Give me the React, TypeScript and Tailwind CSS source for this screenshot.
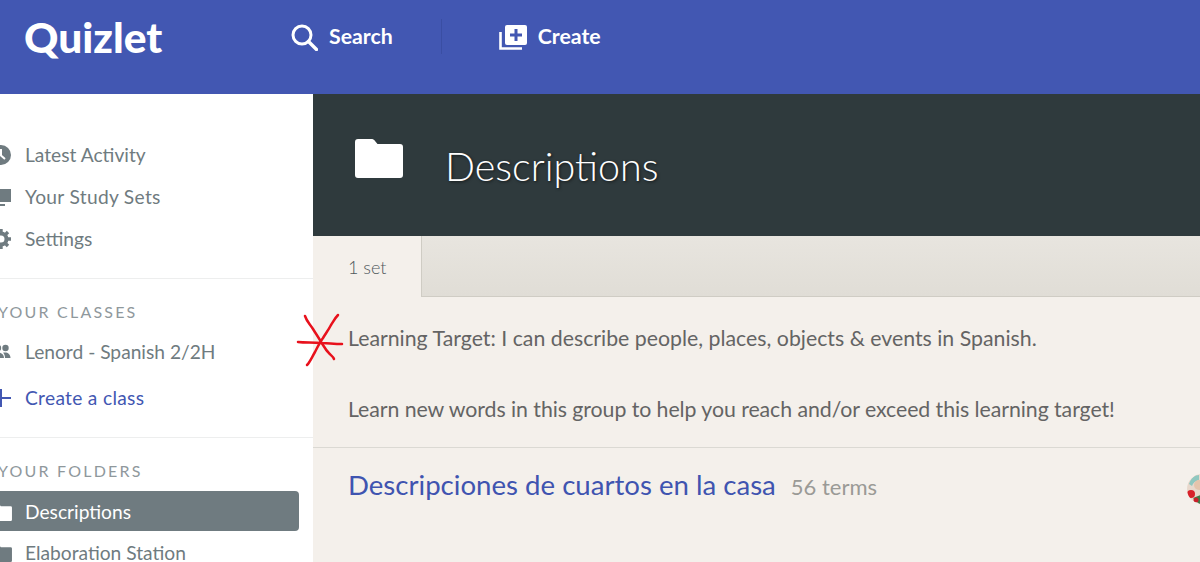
import React from "react";

const font = { fontFamily: '"Lato", "Liberation Sans", sans-serif' };

function ClockIcon() {
  return (
    <svg viewBox="0 0 20 20" className="w-[20px] h-[20px]">
      <circle cx="10" cy="10" r="10" fill="#6f7b80" />
      <path d="M10 4v6.500l4 3.500" stroke="#fff" strokeWidth="2" fill="none" />
    </svg>
  );
}
function SetsIcon() {
  return (
    <svg viewBox="0 0 20 20" className="w-[20px] h-[20px]">
      <path d="M3 2h17v13H3z" fill="#6f7b80" />
      <path d="M0 17h14v2H0z" fill="#6f7b80" />
    </svg>
  );
}
function GearIcon() {
  return (
    <svg viewBox="0 0 20 20" className="w-[20px] h-[20px]">
      <circle cx="10" cy="10" r="5.500" fill="none" stroke="#6f7b80" strokeWidth="4" />
      <path d="M10 0v20M0 10h20M3 3l14 14M17 3L3 17" stroke="#6f7b80" strokeWidth="3.400" strokeDasharray="3.400 13.200 3.400" />
    </svg>
  );
}
function PeopleIcon() {
  return (
    <svg viewBox="0 0 20 20" className="w-[20px] h-[20px]">
      <circle cx="7" cy="6" r="3.200" fill="#6f7b80" />
      <circle cx="14.500" cy="6" r="3.200" fill="#6f7b80" />
      <path d="M1 16c0-4 3-5.500 6-5.500s6 1.500 6 5.500zM14 16c0-2-.5-4-2-5.300 4-1 7.500 1 7.500 5.300z" fill="#6f7b80" />
    </svg>
  );
}
function PlusIcon() {
  return (
    <svg viewBox="0 0 20 20" className="w-[20px] h-[20px]">
      <path d="M10 1v18M0 10h20" stroke="#4257b2" strokeWidth="2" />
    </svg>
  );
}
function FolderIcon({ fill, className }: { fill: string; className: string }) {
  return (
    <svg viewBox="0 0 48 39" className={className}>
      <path d="M3 0h13c2 0 3 .5 4 2l2.500 3H45a3 3 0 0 1 3 3v28a3 3 0 0 1-3 3H3a3 3 0 0 1-3-3V3a3 3 0 0 1 3-3z" fill={fill} />
    </svg>
  );
}

function NavRow({ icon, label, color = "text-[#6f7b80]", h = "h-[42px]" }: { icon: React.ReactNode; label: string; color?: string; h?: string }) {
  return (
    <div className={`flex items-center ${h}`}>
      <div className="w-[34px] -ml-[9px] shrink-0 flex">{icon}</div>
      <span className={`text-[19.2px] whitespace-nowrap ${color}`}>{label}</span>
    </div>
  );
}

export default function App() {
  return (
    <div className="w-[1200px] h-[562px] overflow-hidden flex flex-col bg-white" style={font}>
      <header className="h-[94px] shrink-0 bg-[#4257b2] flex items-start text-white">
        <div className="ml-[24px] mt-[12px] w-[267px] text-[42.5px] leading-[50px] font-black">Quizlet</div>
        <div className="mt-[23px] flex items-center h-[28px]">
          <svg viewBox="0 0 27 27" className="w-[27px] h-[27px]">
            <circle cx="11" cy="11" r="9" fill="none" stroke="#fff" strokeWidth="3" />
            <path d="M17.500 17.500L25.500 25.500" stroke="#fff" strokeWidth="3.400" strokeLinecap="round" />
          </svg>
          <span className="ml-[11px] text-[21.3px] font-bold">Search</span>
        </div>
        <div className="ml-[48px] mt-[19px] w-px h-[35px] bg-[#3a4ea3]" />
        <div className="ml-[57px] mt-[23px] flex items-center h-[28px]">
          <svg viewBox="0 0 28 28" className="w-[28px] h-[28px]">
            <path d="M8 2h18a2 2 0 0 1 2 2v16a2 2 0 0 1-2 2H8a2 2 0 0 1-2-2V4a2 2 0 0 1 2-2z" fill="#fff" />
            <path d="M17 6v12M11 12h12" stroke="#4257b2" strokeWidth="3" />
            <path d="M1.500 9v16.500H23" stroke="#fff" strokeWidth="2.600" fill="none" />
          </svg>
          <span className="ml-[11px] text-[21.3px] font-bold">Create</span>
        </div>
      </header>
      <div className="flex flex-1 min-h-0">
        <aside className="w-[313px] shrink-0 overflow-hidden pt-[40px] bg-white">
          <NavRow icon={<ClockIcon />} label="Latest Activity" />
          <NavRow icon={<SetsIcon />} label="Your Study Sets" color="text-[#6f7b80] tracking-[0.3px]" />
          <NavRow icon={<GearIcon />} label="Settings" />
          <div className="h-px bg-[#edeeee] mt-[18px]" />
          <div className="mt-[23px] -ml-[2px] text-[16px] leading-[20px] tracking-[2.2px] text-[#8f989c] whitespace-nowrap">YOUR CLASSES</div>
          <div className="mt-[9px]"><NavRow icon={<PeopleIcon />} label="Lenord - Spanish 2/2H" /></div>
          <div className="mt-[3px]"><NavRow icon={<PlusIcon />} label="Create a class" color="text-[#4257b2] tracking-[0.3px]" h="h-[44px]" /></div>
          <div className="h-px bg-[#edeeee] mt-[17px]" />
          <div className="mt-[23px] -ml-[2px] text-[16px] leading-[20px] tracking-[2.2px] text-[#8f989c] whitespace-nowrap">YOUR FOLDERS</div>
          <div className="mt-[10px] w-[299px] h-[40px] bg-[#6f7b80] rounded-r-[4px]">
            <NavRow icon={<FolderIcon fill="#fff" className="w-[21px] h-[17px]" />} label="Descriptions" color="text-white" h="h-[42px]" />
          </div>
          <div className="mt-[1px]"><NavRow icon={<FolderIcon fill="#6f7b80" className="w-[21px] h-[17px]" />} label="Elaboration Station" /></div>
        </aside>
        <main className="flex-1 min-w-0 bg-[#f4f0eb] flex flex-col relative">
          <div className="h-[142px] shrink-0 bg-[#2f3a3d] flex items-start">
            <FolderIcon fill="#fff" className="ml-[42px] mt-[45px] w-[48px] h-[39px]" />
            <h1 className="ml-[42px] mt-[47px] text-[39.5px] leading-[50px] font-light text-white [text-shadow:1px_1px_3px_rgba(0,0,0,0.6)]">Descriptions</h1>
          </div>
          <div className="h-[61px] shrink-0 flex">
            <div className="w-[109px] pl-[35px] pt-[18px] text-[18px] leading-[26px] font-light text-[#4f585c] border-r border-[#cfccc4]">1 set</div>
            <div className="flex-1 bg-gradient-to-b from-[#e8e5df] to-[#e0ddd6] border-b border-[#cfccc4]" />
          </div>
          <div className="pl-[35px] pt-[28px] text-[21.3px] leading-[26px] text-[#646464] whitespace-nowrap">
            <p>Learning Target: I can describe people, places, objects &amp; events in Spanish.</p>
            <p className="mt-[45px] tracking-[-0.06px]">Learn new words in this group to help you reach and/or exceed this learning target!</p>
          </div>
          <div className="h-px bg-[#dbd9d3] mt-[25px]" />
          <div className="pl-[35px] pt-[20px] flex items-baseline whitespace-nowrap">
            <span className="text-[27.6px] leading-[34px] text-[#3f54b0]">Descripciones de cuartos en la casa</span>
            <span className="ml-[15px] text-[22px] text-[#9a9a96]">56 terms</span>
          </div>
          <div className="absolute left-[874px] top-[380px] w-[30px] h-[30px] rounded-full overflow-hidden bg-[#e8d8cc]">
            <svg viewBox="0 0 30 30" className="w-full h-full">
              <path d="M2 10c2-6 6-9 10-9v5c-4 1-6 3-7 6z" fill="#8fc8c0" />
              <circle cx="12" cy="11" r="5" fill="#e4c4ac" />
              <circle cx="4" cy="20" r="4" fill="#d8212a" />
              <path d="M6 24l10-4 6 8-10 2z" fill="#3f7d4a" />
              <circle cx="9" cy="26" r="2.500" fill="#c8202a" />
            </svg>
          </div>
          <svg viewBox="0 0 46 56" className="absolute left-[-16px] top-[220px] w-[46px] h-[56px] overflow-visible">
            <g stroke="#e8111c" strokeWidth="2.500" fill="none" strokeLinecap="round">
              <path d="M8 2c2 6 5 8 8 13 3 5 6 9 8 13 3 4 4 7 7 10 2 3 5 4 6 7" />
              <path d="M41 1c-3 3-5 7-7 10-2 4-5 8-8 13-3 4-5 8-8 14-3 5-5 10-8 13" />
              <path d="M1 28c8 1 14 0 24 1 6 0 12 1 20 1" />
            </g>
          </svg>
        </main>
      </div>
    </div>
  );
}
